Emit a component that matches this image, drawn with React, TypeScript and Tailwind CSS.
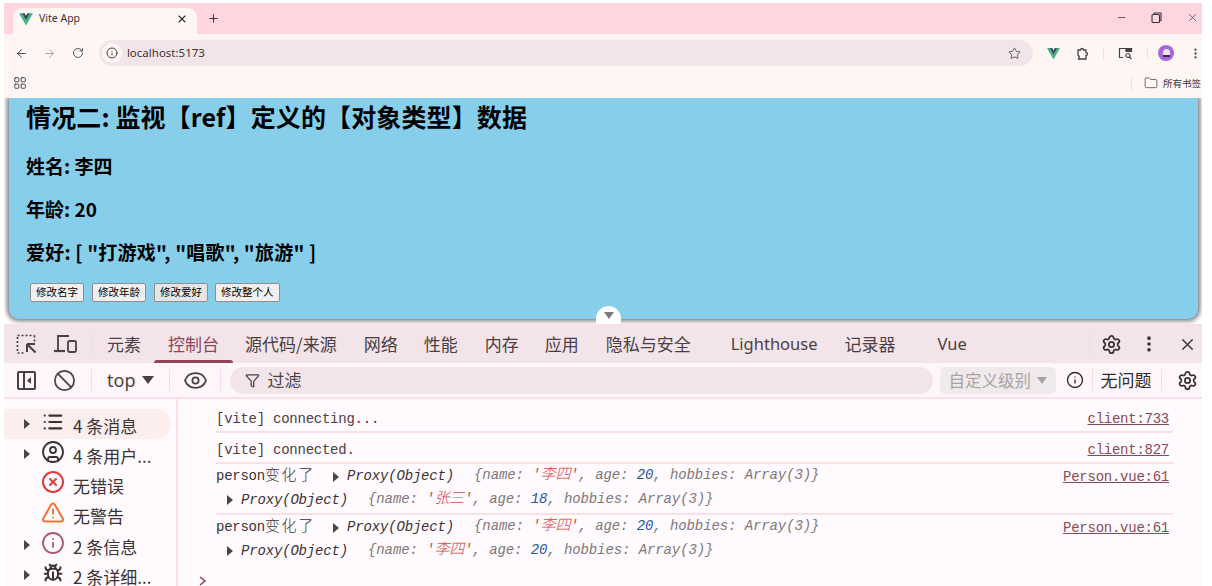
import { ArrowLeft, ArrowRight, RotateCw, Info, Star, MoreVertical, X, Plus, Minus, Folder, LayoutGrid, Settings, Ban, Eye, Filter, List, CircleUser, CircleX, TriangleAlert, Bug } from "lucide-react";
import type { ReactNode } from "react";

const cjk = "font-['Noto_Sans_CJK_SC','Noto_Sans',sans-serif]";

function VueLogo({ size = 16 }: { size?: number }) {
  return (
    <svg width={size} height={size} viewBox="0 0 24 22">
      <path d="M0 1h5l7 12 7-12h5L12 22z" fill="#41b883" />
      <path d="M5 1h4.5L12 5.5 14.5 1H19l-7 12z" fill="#35495e" />
    </svg>
  );
}

function Arrow() {
  return <span className="w-0 h-0 border-y-[5px] border-y-transparent border-l-[6px] border-l-[#474747] inline-block" />;
}

function SideRow({ arrow, icon, label, active }: { arrow?: boolean; icon: ReactNode; label: string; active?: boolean }) {
  return (
    <div className={`h-[30.2px] flex items-center rounded-r-full w-[167px] ${active ? "bg-[#fbeeec]" : ""}`}>
      <div className="w-[38px] shrink-0 pl-[20px] flex items-center">{arrow && <Arrow />}</div>
      <div className="w-[24px] shrink-0 flex justify-center -mt-[4px] -ml-[1px]">{icon}</div>
      <span className="ml-[8px] text-[17px] text-[#3c3236] whitespace-nowrap mt-[3px]">{label}</span>
    </div>
  );
}

function Val({ name, age }: { name: string; age: string }) {
  return (
    <span className="text-[#7d787a] tracking-[-0.1px]">
      {"{name: "}
      <span className="text-[#d9453c]">'<span className="text-[15px] font-light">{name}</span>'</span>
      {", age: "}
      <span className="text-[#1f55a8]">{age}</span>
      {", hobbies: Array(3)}"}
    </span>
  );
}

function Proxy({ name, age }: { name: string; age: string }) {
  return (
    <span className="inline-flex items-center italic">
      <Arrow />
      <span className="ml-[8px] text-[#3c3236] tracking-[-0.17px]">Proxy(Object)</span>
      <span className="ml-[20px]"><Val name={name} age={age} /></span>
    </span>
  );
}

function LogPair({ age, first, last }: { age: string; first: string; last?: boolean }) {
  return (
    <div className={`h-[51px] pt-[1px] pr-[4px] ${last ? "" : "border-b-2 border-[#fde0e4]"}`}>
      <div className="flex items-center h-[24px]">
        <span className="text-[#3c3236]">person<span className="text-[15px] font-light tracking-[1.7px]">变化了</span></span>
        <span className="ml-[18px]"><Proxy name="李四" age="20" /></span>
        <span className="ml-auto underline text-[#8a4a55]">Person.vue:61</span>
      </div>
      <div className="flex items-center h-[22px] pl-[11px]"><Proxy name={first} age={age} /></div>
    </div>
  );
}

export default function App() {
  return (
    <div className={`w-[1212px] h-[586px] overflow-hidden bg-white pl-[4px] pr-[10px] pt-[3px] ${cjk}`}>
      {/* tab strip */}
      <div className="h-[31px] bg-[#ffd6de] flex items-end pl-[9px]">
        <div className="w-[184px] h-[26px] bg-[#fff6f4] rounded-t-[9px] flex items-center pl-[6px] pr-[9px] pb-[4px]">
          <VueLogo size={14} />
          <span className="ml-[6px] text-[10.5px] text-[#3c3236] font-['Noto_Sans',sans-serif]">Vite App</span>
          <X size={12} strokeWidth={2.2} className="ml-auto text-[#2f2a2c]" />
        </div>
        <Plus size={13} strokeWidth={1.8} className="ml-[10px] mb-[9px] text-[#3c3236]" />
        <div className="ml-auto mb-[10px] flex items-center pr-[3px] text-[#3c3236]">
          <Minus size={11} strokeWidth={1.6} />
          <svg className="ml-[24px]" width="11" height="11" viewBox="0 0 11 11" fill="none" stroke="currentColor" strokeWidth="1.1">
            <rect x="1" y="2.5" width="7.5" height="8" rx="1" />
            <path d="M3 2.5V1h7v7.5H8.5" />
          </svg>
          <X size={13} strokeWidth={1.2} className="ml-[24px]" />
        </div>
      </div>
      {/* address bar */}
      <div className="h-[34px] bg-[#fff6f4] flex items-center pl-[11px] pt-[4px] text-[#4a4044]">
        <ArrowLeft size={13} strokeWidth={1.8} />
        <ArrowRight size={13} strokeWidth={1.8} className="ml-[15px] text-[#ad9fa3]" />
        <RotateCw size={12} strokeWidth={1.8} className="ml-[16px]" />
        <div className="ml-[15px] w-[937px] h-[26px] rounded-full bg-[#f2e5ea] flex items-center pl-[3px] pr-[12px]">
          <span className="w-[20px] h-[20px] rounded-full bg-[#fff6f4] flex items-center justify-center">
            <Info size={12} strokeWidth={1.8} className="text-[#2f2a2c]" />
          </span>
          <span className="ml-[5px] text-[11.5px] text-[#3c3236] font-['Noto_Sans',sans-serif]">localhost:5173</span>
          <Star size={13} strokeWidth={1.5} className="ml-auto" />
        </div>
        <span className="ml-[14px]"><VueLogo size={13} /></span>
        <svg className="ml-[16px]" width="13" height="13" viewBox="0 0 13 13" fill="none" stroke="#4a4044" strokeWidth="1.3">
          <path d="M2 3h2.5a1.5 1.5 0 013 0H10v2.5a1.5 1.5 0 010 3V12H2.5l.8-2.5L2 8z" />
        </svg>
        <span className="ml-[14px] w-px h-[12px] bg-[#fbd9df]" />
        <svg className="ml-[14px]" width="15" height="14" viewBox="0 0 15 14" fill="none" stroke="#4a4044" strokeWidth="1.2">
          <path d="M5 11.5H1.5v-9h12v3" />
          <path d="M8 2.5h5.5v3H8z" fill="#4a4044" />
          <circle cx="10" cy="9.5" r="2" />
          <path d="M11.5 11l2 2" />
        </svg>
        <span className="ml-[14px] w-px h-[12px] bg-[#fbd9df]" />
        <span className="ml-[10px] w-[16px] h-[16px] rounded-full bg-[#a768d9] flex items-center justify-center">
          <span className="w-[7px] h-[8px] rounded-t-full bg-[#ece6ee] border-b-2 border-[#39313a]" />
        </span>
        <MoreVertical size={13} strokeWidth={2.2} className="ml-[15px]" />
      </div>
      {/* bookmarks */}
      <div className="h-[30px] bg-[#fff6f4] flex items-center pl-[9px] text-[#4a4044]">
        <LayoutGrid size={14} strokeWidth={1.6} />
        <span className="ml-auto w-px h-[13px] bg-[#fbd9df]" />
        <Folder size={14} strokeWidth={1.3} className="ml-[12px]" />
        <span className="ml-[5px] mr-[1px] text-[9.5px] text-[#3c3236] whitespace-nowrap">所有书签</span>
      </div>
      {/* page */}
      <div className="h-[226px] bg-white relative px-[5px] overflow-hidden">
        <div className="h-[221px] bg-[#87ceeb] rounded-b-[10px] shadow-[0_0_5px_2px_rgba(0,0,0,0.55)] pl-[17px] text-black w-[1189px]">
          <h2 className="text-[25px] leading-[36px] font-bold h-[38px] tracking-[0.13px]">情况二: 监视【ref】定义的【对象类型】数据</h2>
          <p className="text-[19px] leading-[26px] font-bold mt-[17px]">姓名: 李四</p>
          <p className="text-[19px] leading-[26px] font-bold mt-[17px]">年龄: 20</p>
          <p className="text-[19px] leading-[26px] font-bold mt-[17px] tracking-[0.2px]">爱好: [ "打游戏", "唱歌", "旅游" ]</p>
          <div className="flex gap-[8px] pl-[4px] mt-[18px]">
            {["修改名字", "修改年龄", "修改爱好", "修改整个人"].map((b, i) => (
              <button key={b} className={`h-[19px] px-[5px] border border-[#8f8f8f] rounded-[2px] text-[10.5px] leading-none text-black ${i === 2 ? "bg-[#e5e5e5] -mr-[1px]" : "bg-[#efefef]"}`}>
                {b}
              </button>
            ))}
          </div>
        </div>
        {/* vue devtools toggle */}
        <div className="absolute left-[592px] top-[208px] w-[25px] h-[18px] bg-white rounded-t-full flex justify-center pt-[6px]">
          <span className="w-0 h-0 border-x-[5px] border-x-transparent border-t-[7px] border-t-[#7b7b7b]" />
        </div>
      </div>
      {/* devtools tabs */}
      <div className="h-[39px] bg-[#f3e4ea] border-t border-[#fde0e4] flex items-center text-[17px] text-[#4a4044]">
        <svg className="ml-[12px]" width="21" height="21" viewBox="0 0 21 21" fill="none" stroke="#4a4044" strokeWidth="1.7">
          <path d="M1.5 3v14M1.5 1.5h17M18.5 1.5v6" strokeDasharray="2 2" />
          <path d="M1.5 19h6" strokeDasharray="2 2" />
          <path d="M11 10v8M11 10h8M11 10l8.5 8.5" strokeWidth="2" />
        </svg>
        <svg className="ml-[17px]" width="23" height="20" viewBox="0 0 23 20" fill="none" stroke="#4a4044" strokeWidth="1.8">
          <path d="M4 16V2h11" />
          <path d="M0 17h11" strokeWidth="2.2" />
          <rect x="14" y="7" width="8" height="11" rx="1.5" />
        </svg>
        <span className="ml-[14px] w-px h-[24px] bg-[#fbd9df]" />
        <div className="flex items-center ml-[15px] h-full">
          <span>元素</span>
          <span className="ml-[27px] text-[#8f4457] relative h-full flex items-center">
            控制台
            <span className="absolute left-[-14px] right-[-14px] bottom-0 h-[3px] rounded-t-[3px] bg-[#8f4457]" />
          </span>
          <span className="ml-[26px]">源代码/来源</span>
          <span className="ml-[27px]">网络</span>
          <span className="ml-[26px]">性能</span>
          <span className="ml-[27px]">内存</span>
          <span className="ml-[26px]">应用</span>
          <span className="ml-[27px]">隐私与安全</span>
          <span className="ml-[40px] text-[16.5px] font-['Noto_Sans',sans-serif]">Lighthouse</span>
          <span className="ml-[27px]">记录器</span>
          <span className="ml-[42px] text-[16.5px] font-['Noto_Sans',sans-serif]">Vue</span>
        </div>
        <div className="ml-auto flex items-center pr-[5px] text-[#3c3236] h-full">
          <span className="w-px h-[24px] bg-[#fbd9df] mr-[11px]" />
          <Settings size={21} strokeWidth={2} />
          <MoreVertical size={20} strokeWidth={2.4} className="ml-[17px]" />
          <X size={19} strokeWidth={1.8} className="ml-[19px]" />
        </div>
      </div>
      {/* console toolbar */}
      <div className="h-[36px] bg-[#fff6f9] border-b-2 border-[#fde0e4] flex items-center text-[#4a4044]">
        <svg className="ml-[13px]" width="19" height="19" viewBox="0 0 19 19" fill="none" stroke="#4a4044" strokeWidth="2">
          <rect x="1" y="1" width="17" height="17" rx="1" />
          <path d="M7 1v17" />
          <path d="M14 6v7l-4-3.5z" fill="#4a4044" stroke="none" />
        </svg>
        <Ban size={23} strokeWidth={1.8} className="ml-[17px]" />
        <span className="ml-[15px] w-px h-[22px] bg-[#fbd9df]" />
        <span className="ml-[15px] text-[18px] font-['Noto_Sans',sans-serif]">top</span>
        <span className="ml-[7px] w-0 h-0 border-x-[6px] border-x-transparent border-t-[8px] border-t-[#4a4044]" />
        <span className="ml-[15px] w-px h-[22px] bg-[#fbd9df]" />
        <Eye size={25} strokeWidth={1.7} className="ml-[13px]" />
        <span className="ml-[12px] w-px h-[22px] bg-[#fbd9df]" />
        <div className="ml-[9px] w-[703px] h-[27px] rounded-full bg-[#f3e4ea] flex items-center pl-[15px]">
          <Filter size={15} strokeWidth={2} />
          <span className="ml-[7px] text-[17px]">过滤</span>
        </div>
        <div className="ml-[7px] w-[116px] h-[27px] rounded-[5px] bg-[#f0eaec] flex items-center pl-[8px] text-[16.5px] text-[#a9a2a5]">
          自定义级别
          <span className="ml-[6px] w-0 h-0 border-x-[5px] border-x-transparent border-t-[7px] border-t-[#a9a2a5]" />
        </div>
        <Info size={18} strokeWidth={1.8} className="ml-[10px] text-[#2f2a2c]" />
        <span className="ml-[8px] w-px h-[22px] bg-[#fbd9df]" />
        <span className="ml-[7px] text-[17px] text-[#2f2a2c]">无问题</span>
        <span className="ml-[10px] w-px h-[22px] bg-[#fbd9df]" />
        <Settings size={21} strokeWidth={2} className="ml-[15px] text-[#3c3236]" />
      </div>
      {/* console body */}
      <div className="h-[188px] bg-[#fffafd] flex">
        <div className="w-[174px] shrink-0 border-r-2 border-[#fde0e4] pt-[10px]">
          <SideRow arrow active icon={<List size={22} strokeWidth={2.4} className="text-[#3c3236]" />} label="4 条消息" />
          <SideRow arrow icon={<CircleUser size={24} strokeWidth={1.8} className="text-[#3c3236]" />} label="4 条用户..." />
          <SideRow icon={<CircleX size={24} strokeWidth={2} className="text-[#e03c3c]" />} label="无错误" />
          <SideRow icon={<TriangleAlert size={25} strokeWidth={2} className="text-[#ee7430]" />} label="无警告" />
          <SideRow arrow icon={<Info size={24} strokeWidth={1.8} className="text-[#a85a72]" />} label="2 条信息" />
          <SideRow arrow icon={<Bug size={20} strokeWidth={2.4} className="text-[#3c3236]" />} label="2 条详细..." />
        </div>
        <div className="flex-1 pl-[38px] pr-[29px] font-['Liberation_Mono','Noto_Sans_CJK_SC',monospace] text-[14px] tracking-[-0.25px] text-[#4a4044] relative">
          <div className="border-b-2 border-[#fde0e4] h-[34px] pt-[10px] flex justify-between pr-[4px]">
            <span>[vite] connecting...</span>
            <span className="underline text-[#8a4a55]">client:733</span>
          </div>
          <div className="border-b-2 border-[#fde0e4] h-[31px] pt-[7px] flex justify-between pr-[4px]">
            <span>[vite] connected.</span>
            <span className="underline text-[#8a4a55]">client:827</span>
          </div>
          <LogPair age="18" first="张三" />
          <LogPair age="20" first="李四" last />
          <svg className="absolute left-[20px] top-[176px]" width="10" height="12" viewBox="0 0 10 12" fill="none" stroke="#8f4457" strokeWidth="1.6">
            <path d="M2 2l5 4-5 4" />
          </svg>
        </div>
      </div>
    </div>
  );
}
